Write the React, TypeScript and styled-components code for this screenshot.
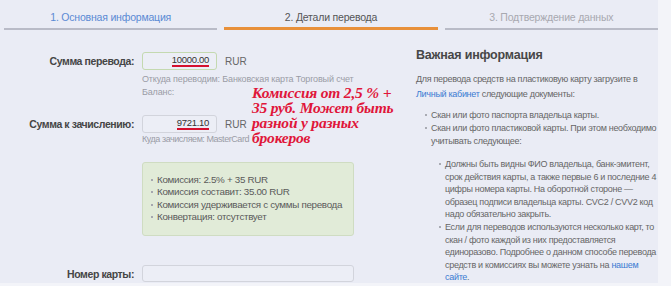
import styled, { createGlobalStyle } from 'styled-components'

const GlobalStyle = createGlobalStyle`
  html, body {
    margin: 0;
    padding: 0;
    background: #f3f4f9;
  }
  body {
    font-family: "Liberation Sans", Arial, sans-serif;
  }
`

const Panel = styled.div`
  width: 658px;
  height: 283px;
  background: #eaecf5;
  overflow: hidden;
  position: relative;
`

const Tabs = styled.div`
  display: grid;
  grid-template-columns: repeat(3, 1fr);
  column-gap: 7px;
  padding-left: 4px;
`

const Tab = styled.div<{ $state: 'done' | 'active' | 'next' }>`
  padding-top: 11px;
  padding-bottom: ${(p) => (p.$state === 'active' ? 4 : 5)}px;
  text-align: center;
  font-size: 10.5px;
  line-height: 12px;
  letter-spacing: -0.2px;
  color: ${(p) => (p.$state === 'done' ? '#5a8ad4' : p.$state === 'active' ? '#555' : '#a8a9b0')};
  border-bottom: ${(p) => (p.$state === 'active' ? '3px solid #e8903a' : '2px solid #b9bbc7')};
`

const Body = styled.div`
  display: flex;
`

const LeftCol = styled.div`
  flex: 0 0 380px;
  padding-top: 22px;
  box-sizing: border-box;
`

const FormRow = styled.div<{ $top?: number }>`
  display: grid;
  grid-template-columns: 134px 1fr;
  column-gap: 8px;
  margin-top: ${(p) => p.$top ?? 0}px;
`

const Label = styled.div`
  text-align: right;
  font-size: 10.5px;
  font-weight: bold;
  letter-spacing: -0.4px;
  line-height: 18px;
  color: #454545;
`

const Field = styled.div`
  display: flex;
  flex-direction: column;
  align-items: flex-start;
`

const InputLine = styled.div`
  display: flex;
  align-items: center;
  gap: 8px;
`

const Input = styled.div<{ $ok?: boolean; $wide?: boolean; $h?: number }>`
  width: ${(p) => (p.$wide ? 212 : 75)}px;
  height: ${(p) => p.$h ?? 18}px;
  box-sizing: border-box;
  border: 1px solid ${(p) => (p.$ok ? '#c4d9b0' : '#d2d4dc')};
  border-radius: 3px;
  background: #eceef6;
  display: flex;
  align-items: center;
  justify-content: flex-end;
  padding-right: 7px;
  font-size: 9.5px;
  letter-spacing: -0.3px;
  color: #333;
`

const Marked = styled.span`
  display: inline-block;
  line-height: 8px;
  padding-bottom: 1px;
  border-bottom: 2px solid #d4102e;
`

const Currency = styled.span`
  font-size: 10px;
  color: #666;
`

const Hint = styled.div<{ $top?: number; $tight?: boolean }>`
  margin-top: ${(p) => p.$top ?? 0}px;
  font-size: 9px;
  line-height: 13px;
  letter-spacing: ${(p) => (p.$tight ? -0.45 : -0.15)}px;
  color: #9a9ca6;
  white-space: nowrap;
`

const InfoBox = styled.ul`
  margin: 16px 0 0;
  width: 212px;
  box-sizing: border-box;
  padding: 11px 8px;
  list-style: none;
  background: #e1ebd8;
  border: 1px solid #cfdcc2;
  border-radius: 3px;
`

const Dot = styled.li`
  position: relative;
  padding-left: 6px;
  font-size: 9.8px;
  line-height: 12.4px;
  letter-spacing: -0.3px;
  color: #5a5a5a;
  white-space: nowrap;
  &::before {
    content: '';
    position: absolute;
    left: 0;
    top: 5px;
    width: 2px;
    height: 2px;
    background: #a5a7ae;
  }
`

const Note = styled.div`
  position: absolute;
  left: 252px;
  top: 85px;
  font-family: "Liberation Serif", "Times New Roman", serif;
  font-style: italic;
  font-weight: bold;
  font-size: 15.5px;
  line-height: 15px;
  letter-spacing: -0.2px;
  color: #e0163a;
`

const RightCol = styled.div`
  flex: 1;
  min-width: 0;
  padding: 17px 0 0 36px;
  color: #666;
`

const Heading = styled.div`
  font-size: 12.5px;
  font-weight: bold;
  line-height: 16px;
  color: #474747;
  letter-spacing: -0.2px;
`

const Para = styled.p`
  margin: 9px 0 0;
  font-size: 9px;
  line-height: 15px;
  letter-spacing: -0.3px;
  white-space: nowrap;
`

const Link = styled.a`
  color: #3b7bd2;
  text-decoration: none;
`

const List = styled.ul<{ $top: number; $indent: number; $lh: number }>`
  list-style: none;
  margin: ${(p) => p.$top}px 0 0;
  padding: 0 0 0 ${(p) => p.$indent}px;
  font-size: 9px;
  line-height: ${(p) => p.$lh}px;
  letter-spacing: -0.3px;
  white-space: nowrap;
  li {
    position: relative;
    padding-left: 6px;
  }
  li::before {
    content: '';
    position: absolute;
    left: 0;
    top: 5px;
    width: 2px;
    height: 2px;
    background: #a9abb3;
  }
`

export default function App() {
  return (
    <>
      <GlobalStyle />
      <Panel>
        <Tabs>
          <Tab $state="done">1. Основная информация</Tab>
          <Tab $state="active">2. Детали перевода</Tab>
          <Tab $state="next">3. Подтверждение данных</Tab>
        </Tabs>
        <Body>
          <LeftCol>
            <FormRow>
              <Label>Сумма перевода:</Label>
              <Field>
                <InputLine>
                  <Input $ok>
                    <Marked>10000.00</Marked>
                  </Input>
                  <Currency>RUR</Currency>
                </InputLine>
                <Hint $top={3}>Откуда переводим: Банковская карта Торговый счет</Hint>
                <Hint>Баланс:</Hint>
              </Field>
            </FormRow>
            <FormRow $top={16}>
              <Label>Сумма к зачислению:</Label>
              <Field>
                <InputLine>
                  <Input>
                    <Marked>9721.10</Marked>
                  </Input>
                  <Currency>RUR</Currency>
                </InputLine>
                <Hint $tight>Куда зачисляем: MasterCard</Hint>
              </Field>
            </FormRow>
            <FormRow>
              <div />
              <InfoBox>
                <Dot>Комиссия: 2.5% + 35 RUR</Dot>
                <Dot>Комиссия составит: 35.00 RUR</Dot>
                <Dot>Комиссия удерживается с суммы перевода</Dot>
                <Dot>Конвертация: отсутствует</Dot>
              </InfoBox>
            </FormRow>
            <FormRow $top={29}>
              <Label>Номер карты:</Label>
              <Field>
                <Input $wide $h={17} />
              </Field>
            </FormRow>
          </LeftCol>
          <RightCol>
            <Heading>Важная информация</Heading>
            <Para>
              Для перевода средств на пластиковую карту загрузите в
              <br />
              <Link href="#">Личный кабинет</Link> следующие документы:
            </Para>
            <List $top={7} $indent={9} $lh={13}>
              <li>Скан или фото паспорта владельца карты.</li>
              <li>
                Скан или фото пластиковой карты. При этом необходимо
                <br />
                учитывать следующее:
                <List $top={10} $indent={8} $lh={12.6}>
                  <li>
                    Должны быть видны ФИО владельца, банк-эмитент,
                    <br />
                    срок действия карты, а также первые 6 и последние 4
                    <br />
                    цифры номера карты. На оборотной стороне —
                    <br />
                    образец подписи владельца карты. CVC2 / CVV2 код
                    <br />
                    надо обязательно закрыть.
                  </li>
                  <li>
                    Если для переводов используются несколько карт, то
                    <br />
                    скан / фото каждой из них предоставляется
                    <br />
                    единоразово. Подробнее о данном способе перевода
                    <br />
                    средств и комиссиях вы можете узнать на <Link href="#">нашем</Link>
                    <br />
                    <Link href="#">сайте</Link>.
                  </li>
                </List>
              </li>
            </List>
          </RightCol>
        </Body>
        <Note>
          Комиссия от 2,5 % +
          <br />
          35 руб. Может быть
          <br />
          разной у разных
          <br />
          брокеров
        </Note>
      </Panel>
    </>
  )
}
